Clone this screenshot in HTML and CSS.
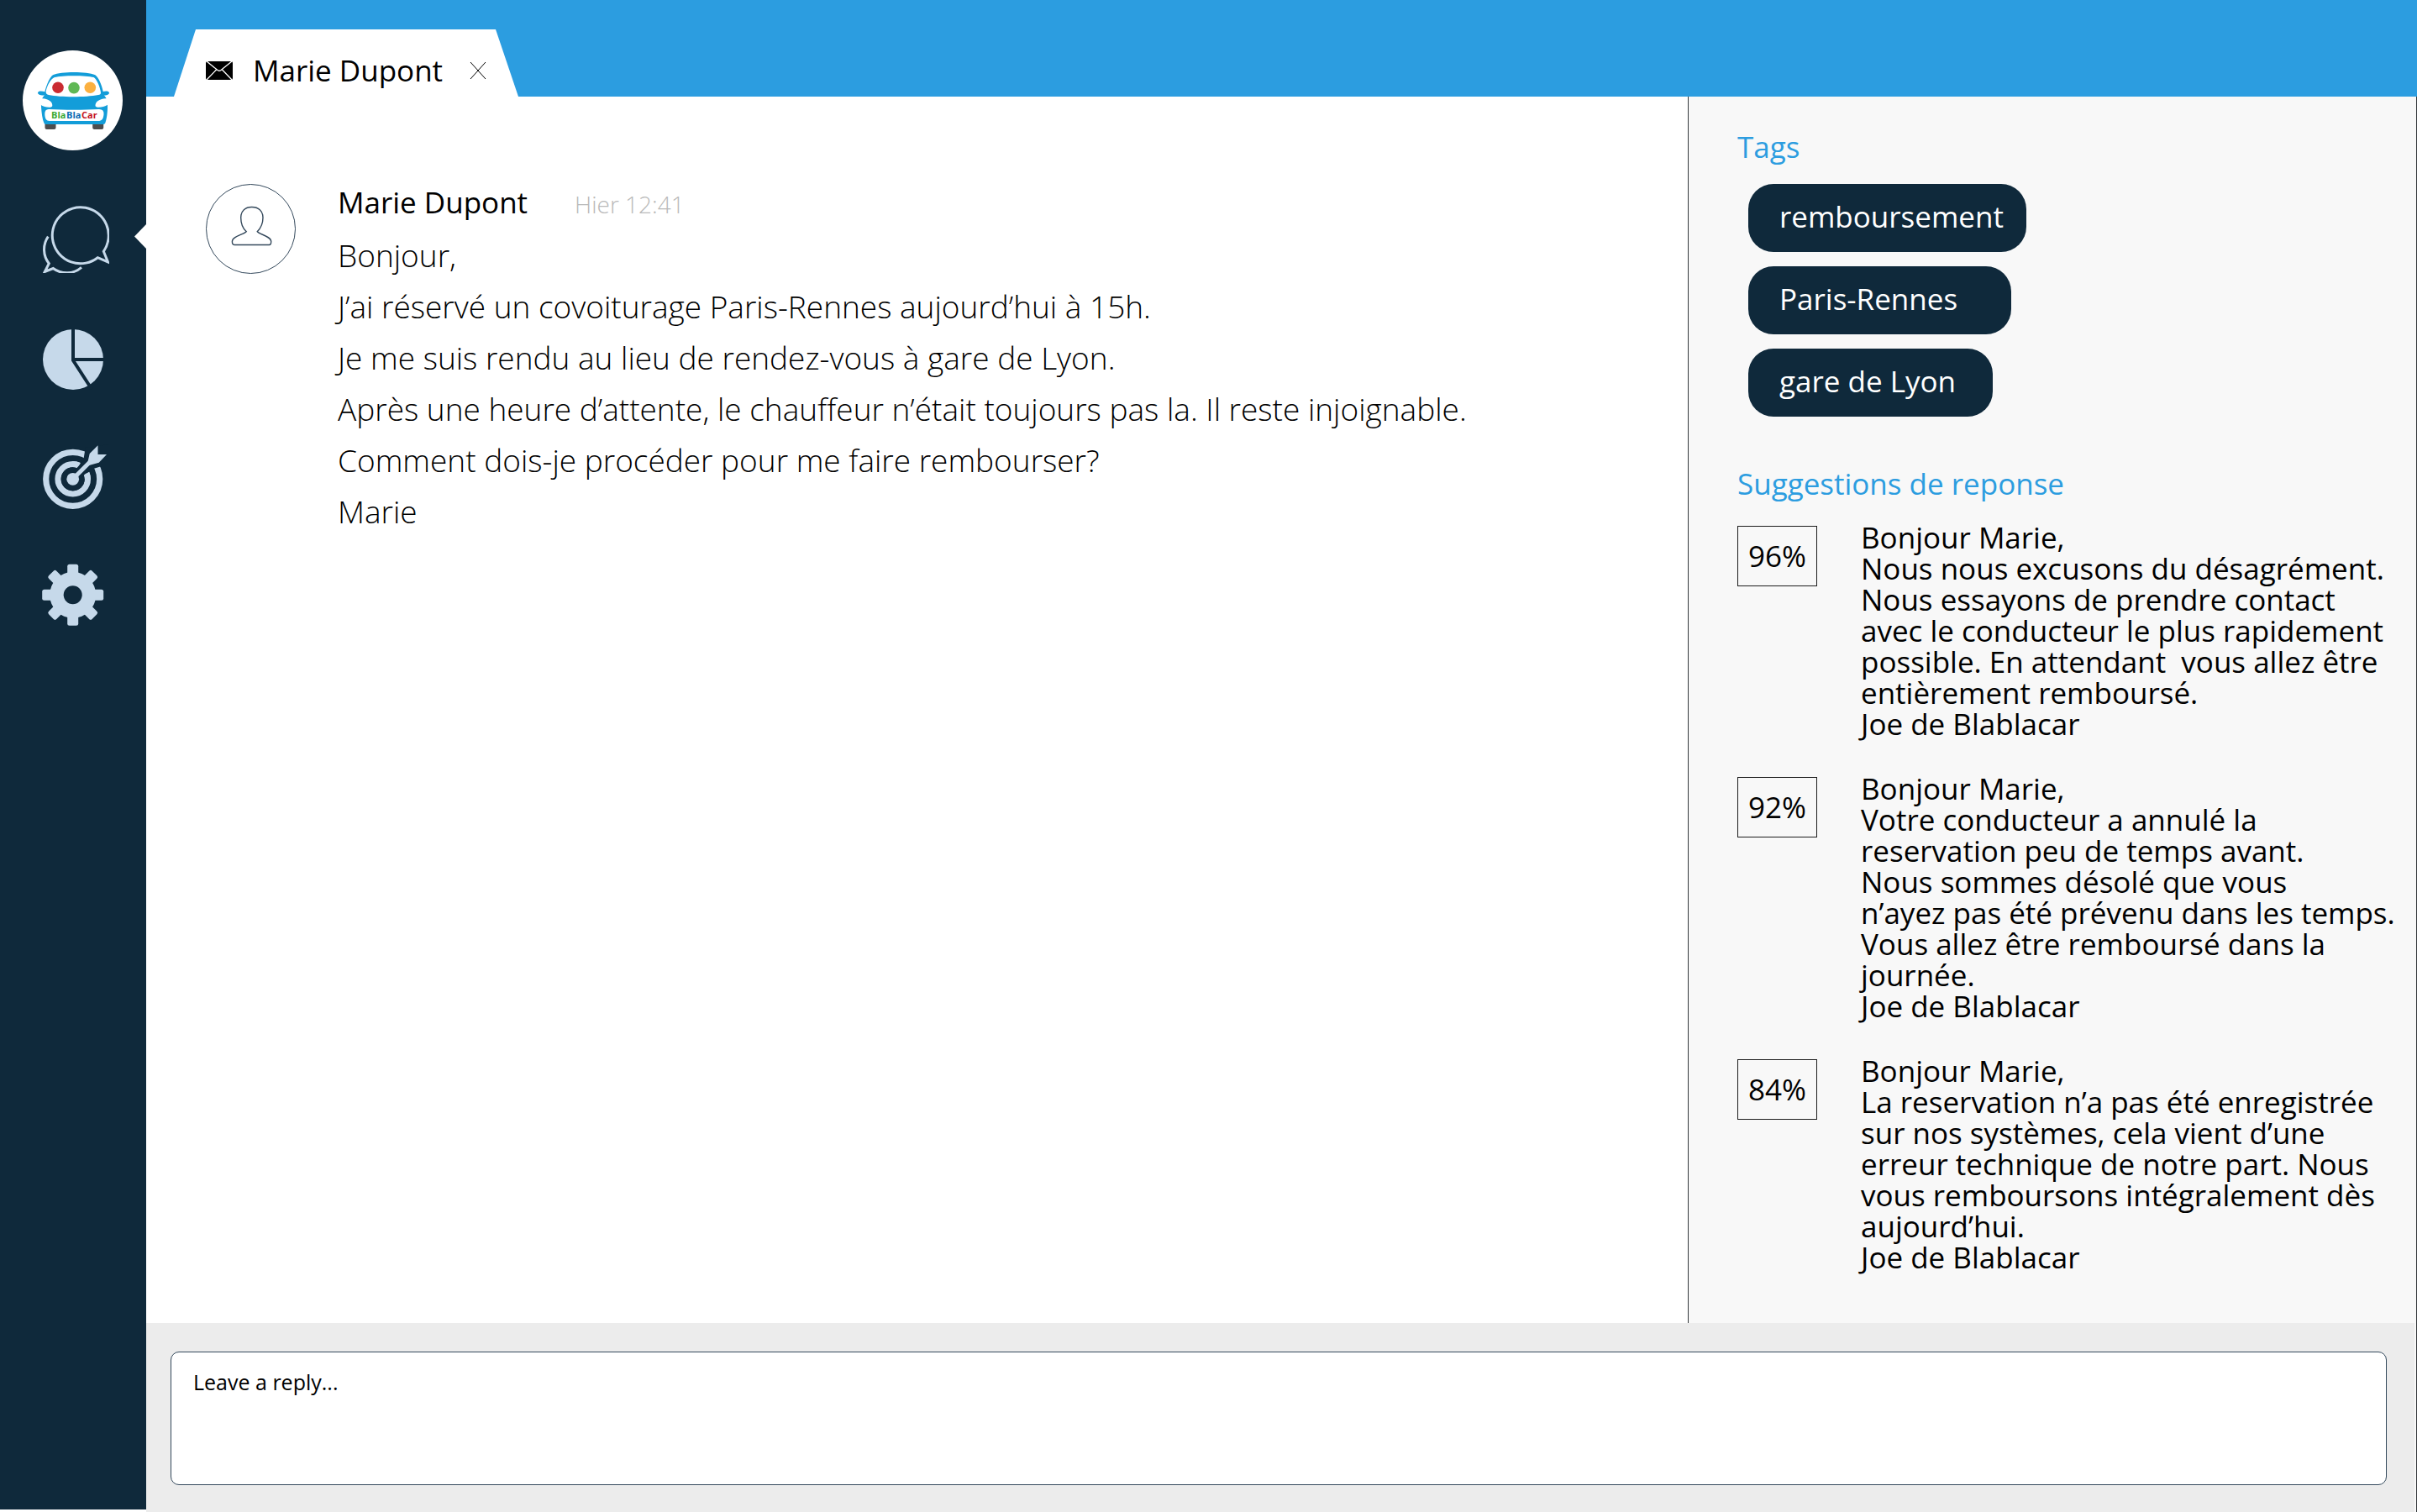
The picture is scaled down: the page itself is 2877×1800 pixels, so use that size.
FILE: index.html
```html
<!DOCTYPE html>
<html lang="fr">
<head>
<meta charset="utf-8">
<title>Marie Dupont</title>
<link rel="stylesheet" href="styles.css">
</head>
<body>
<div class="app">
  <aside class="sidebar">
    <a class="logo" href="#" aria-label="BlaBlaCar">
      <svg viewBox="0 0 119 119">
        <circle cx="59.500" cy="59.500" r="59.500" fill="#fff"/>
        <rect x="26.500" y="84" width="13" height="10" rx="2" fill="#4d4d4f"/>
        <rect x="83.200" y="84" width="13" height="10" rx="2" fill="#4d4d4f"/>
        <path fill="#139dd9" d="M36 29.300C46 25 76 25 86.300 29.300C90 31.500 94.500 42 95.700 49C98 48 103 48 103 50.500C103 53 99 53.500 97 53.500C100.500 57 101.300 62 101 69C100.800 77 99.500 83 98.300 86.500Q97.500 88 95.500 88H28Q26 88 25.400 86.500C23.500 82 22.500 75 22 67C21.700 60 23 56 26 53.500C22 53.500 18 53 18 50.500C18 48 23 48 26.300 49.300C28 42 32 32 36 29.300Z"/>
        <path fill="#fff" d="M38 32C47 29.500 75 29.500 84.500 32C88 34 92.500 44 93 50.500Q93 52.500 90 53C75 56 45 56 31 53Q27.500 52.500 27.600 49C29 42 33 34 38 32Z"/>
        <path fill="#fff" d="M21 57C28 57 36 60 35.300 66C35 69 26 68 21 64.500Z"/>
        <path fill="#fff" d="M101.500 57C94 57 86 60 86.500 66C87 69 96 68 101.500 64.500Z"/>
        <path fill="#fff" d="M31 70C48 71 74 71 91 70Q97 70 96.500 76C96 82 94 84 90 84H32C28 84 26.500 81 26.300 76Q26 70 31 70Z"/>
        <circle cx="42" cy="44.300" r="6.800" fill="#ca2b31"/>
        <circle cx="61" cy="44.600" r="6.800" fill="#60b855"/>
        <circle cx="80.300" cy="44.300" r="6.800" fill="#fbb040"/>
        <g class="logo-text">
          <text x="34" y="81" fill="#3aaa35">Bla</text>
          <text x="52" y="81" fill="#0b6cb5">Bla</text>
          <text x="70" y="81" fill="#c4131b">Car</text>
        </g>
      </svg>
    </a>
    <nav class="nav">
      <a class="nav-link active" href="#" aria-label="Conversations">
        <svg viewBox="0 0 80 80" fill="none" stroke="#c6d9ea" stroke-width="3">
          <path d="M73.300 54.300A33.500 33.500 0 1 0 66.300 61.700L78.500 67Z"/>
          <path d="M7.300 36.700A27 27 0 0 0 8.300 68.700L3.300 78.500L13.300 74.500A27 27 0 0 0 47 73.300"/>
        </svg>
      </a>
      <a class="nav-link" href="#" aria-label="Statistiques">
        <svg viewBox="0 0 80 80">
          <circle cx="37" cy="41" r="36" fill="#c6d9ea"/>
          <path d="M37 0V42L59 76M37 41H78" fill="none" stroke="#0f293b" stroke-width="4"/>
        </svg>
      </a>
      <a class="nav-link" href="#" aria-label="Objectifs">
        <svg viewBox="0 0 80 80">
          <g fill="none" stroke="#c6d9ea" stroke-width="7.200">
            <circle cx="36.700" cy="41.300" r="32"/>
            <circle cx="36.700" cy="41.300" r="17.700"/>
          </g>
          <path fill="#0f293b" d="M51.700 4L49.600 16.700L42 27L50.700 36.700L62 28.700L71 26L80 12V0Z"/>
          <circle cx="36.700" cy="41.300" r="14" fill="#0f293b"/>
          <path fill="none" stroke="#c6d9ea" stroke-width="7" d="M36.700 23.600Q41 23.600 44 25.500M54.400 41.300Q54.400 38 52.800 34.500"/>
          <path stroke="#0f293b" stroke-width="12" d="M40 38L60 18"/>
          <circle cx="36.700" cy="41.300" r="7.400" fill="#c6d9ea"/>
          <path stroke="#c6d9ea" stroke-width="5" d="M37 41L58 20"/>
          <path fill="#c6d9ea" d="M54 23L56.700 11L66.500 1.200V12H77L67.700 21.700L56 25Z"/>
        </svg>
      </a>
      <a class="nav-link" href="#" aria-label="Paramètres">
        <svg viewBox="0 0 80 80">
          <g fill="#c6d9ea" transform="translate(36.700 37.300)">
            <circle r="27.500"/>
            <rect x="-6.500" y="-36.500" width="13" height="73" rx="2.500"/>
            <rect x="-6.500" y="-36.500" width="13" height="73" rx="2.500" transform="rotate(45)"/>
            <rect x="-6.500" y="-36.500" width="13" height="73" rx="2.500" transform="rotate(90)"/>
            <rect x="-6.500" y="-36.500" width="13" height="73" rx="2.500" transform="rotate(135)"/>
            <circle r="11" fill="#0f293b"/>
          </g>
        </svg>
      </a>
    </nav>
  </aside>

  <div class="workspace">
    <header class="topbar">
      <div class="tab">
        <svg class="tab-mail" viewBox="0 0 32 22">
          <rect width="32" height="22" rx="2"/>
          <path d="M1 0L14 10.500Q16 12 18 10.500L31 0M1 22L12.500 10M31 22L19.500 10" fill="none" stroke="#fff" stroke-width="1.300"/>
        </svg>
        <span class="tab-title">Marie Dupont</span>
        <button class="tab-close" type="button" aria-label="Fermer">
          <svg viewBox="0 0 20 20"><path d="M1 0L19 20M19 0L1 20" stroke="#000" stroke-width="1"/></svg>
        </button>
      </div>
    </header>

    <div class="content">
      <main class="conversation">
        <article class="message">
          <svg class="avatar" viewBox="0 0 107 107" fill="none" stroke="#34495c">
            <circle cx="53.500" cy="53.500" r="53" stroke-width="1"/>
            <path stroke-width="1.400" d="M48.300 56.700C44 53 41.700 47 41.700 40C41.700 32 47 27.500 54.700 27.500C62.500 27.500 68 32 68 40C68 47 65 53 61.200 56.700C63 60 77.700 62 77.700 68.500C77.700 71 77 72.500 75.500 72.500H34C32 72.500 31.400 71 31.400 68.500C31.400 62 46 60 48.300 56.700Z"/>
          </svg>
          <div class="message-body">
            <div class="message-head">
              <h1 class="author">Marie Dupont</h1>
              <time class="time">Hier 12:41</time>
            </div>
            <p class="message-text">Bonjour,<br>
            J’ai réservé un covoiturage Paris-Rennes aujourd’hui à 15h.<br>
            Je me suis rendu au lieu de rendez-vous à gare de Lyon.<br>
            Après une heure d’attente, le chauffeur n’était toujours pas la. Il reste injoignable.<br>
            Comment dois-je procéder pour me faire rembourser?<br>
            Marie</p>
          </div>
        </article>
      </main>

      <aside class="panel">
        <h2 class="panel-title">Tags</h2>
        <ul class="tags">
          <li class="tag tag-long">remboursement</li>
          <li class="tag tag-medium">Paris-Rennes</li>
          <li class="tag tag-short">gare de Lyon</li>
        </ul>
        <h2 class="panel-title">Suggestions de reponse</h2>
        <ul class="suggestions">
          <li class="suggestion">
            <span class="score">96%</span>
            <p class="suggestion-text">Bonjour Marie,<br>Nous nous excusons du désagrément.<br>Nous essayons de prendre contact<br>avec le conducteur le plus rapidement<br>possible. En attendant&nbsp; vous allez être<br>entièrement remboursé.<br>Joe de Blablacar</p>
          </li>
          <li class="suggestion">
            <span class="score">92%</span>
            <p class="suggestion-text">Bonjour Marie,<br>Votre conducteur a annulé la<br>reservation peu de temps avant.<br>Nous sommes désolé que vous<br>n’ayez pas été prévenu dans les temps.<br>Vous allez être remboursé dans la<br>journée.<br>Joe de Blablacar</p>
          </li>
          <li class="suggestion">
            <span class="score">84%</span>
            <p class="suggestion-text">Bonjour Marie,<br>La reservation n’a pas été enregistrée<br>sur nos systèmes, cela vient d’une<br>erreur technique de notre part. Nous<br>vous remboursons intégralement dès<br>aujourd’hui.<br>Joe de Blablacar</p>
          </li>
        </ul>
      </aside>
    </div>

    <footer class="bottom">
      <form class="composer">
        <textarea class="reply" aria-label="Leave a reply" placeholder="Leave a reply..."></textarea>
      </form>
    </footer>
  </div>
</div>
</body>
</html>
```

FILE: styles.css
```css
:root {
  --navy: #0f293b;
  --blue: #2c9de0;
  --line: #34383b;
  --panel: #f8f8f8;
}

* {
  box-sizing: border-box;
}

body {
  margin: 0;
  background: #fff;
  color: #000;
  font-family: "Open Sans", "Noto Sans", sans-serif;
  font-size: 35px;
}

h1, h2, p, ul {
  margin: 0;
  padding: 0;
  font-size: inherit;
  font-weight: 400;
  list-style: none;
}

svg {
  display: block;
  width: 100%;
}

.app {
  display: flex;
  min-height: 100vh;
}

/* Sidebar */
.sidebar {
  flex: none;
  width: 174px;
  margin-bottom: 3px;
  padding-top: 60px;
  background: var(--navy);
}

.logo {
  display: block;
  width: 119px;
  margin: 0 0 66px 27px;
}

.logo-text {
  font-size: 11px;
  font-weight: 700;
}

.nav {
  display: flex;
  flex-direction: column;
  gap: 62px;
}

.nav-link {
  position: relative;
  padding-left: 50px;
}

.nav-link svg {
  width: 80px;
  height: 80px;
}

.nav-link.active::after {
  content: "";
  position: absolute;
  top: 22px;
  right: 0;
  width: 14px;
  height: 29px;
  background: #fff;
  clip-path: polygon(100% 0, 0 50%, 100% 100%);
}

/* Main column */
.workspace {
  flex: 1;
  min-width: 0;
  display: flex;
  flex-direction: column;
}

.topbar {
  display: flex;
  align-items: flex-end;
  height: 115px;
  padding-left: 33px;
  background: var(--blue);
}

.tab {
  display: flex;
  align-items: center;
  width: 410px;
  height: 80px;
  padding: 18px 38px 0;
  background: #fff;
  clip-path: polygon(26px 0, calc(100% - 27px) 0, 100% 100%, 0 100%);
}

.tab-mail {
  flex: none;
  width: 32px;
}

.tab-title {
  flex: 1;
  margin-left: 24px;
  line-height: 48px;
  white-space: nowrap;
}

.tab-close {
  flex: none;
  width: 20px;
  padding: 0;
  border: 0;
  background: none;
}

.content {
  flex: 1;
  display: flex;
}

.conversation {
  flex: 1;
  min-width: 0;
  padding: 96px 71px;
}

.message {
  display: flex;
  gap: 50px;
}

.avatar {
  flex: none;
  width: 107px;
  height: 107px;
  margin-top: 8px;
}

.message-head {
  display: flex;
  align-items: baseline;
  gap: 56px;
  line-height: 60px;
}

.time {
  color: #b9b9b9;
  font-size: 28px;
  font-weight: 300;
}

.message-text {
  font-size: 37px;
  font-weight: 300;
  line-height: 61px;
}

/* Right panel */
.panel {
  flex: none;
  width: 868px;
  padding: 36px 0 58px 58px;
  border: solid var(--line);
  border-width: 0 1px;
  background: var(--panel);
}

.panel-title {
  color: var(--blue);
  line-height: 48px;
}

.tags {
  display: flex;
  flex-direction: column;
  align-items: flex-start;
  gap: 17px;
  margin: 20px 0 56px 13px;
}

.tag {
  padding: 0 0 4px 37px;
  border-radius: 30px;
  background: var(--navy);
  color: #fff;
  line-height: 77px;
}

.tag-long {
  width: 331px;
}

.tag-medium {
  width: 313px;
}

.tag-short {
  width: 291px;
}

.suggestions {
  display: flex;
  flex-direction: column;
  gap: 40px;
  margin-top: 21px;
}

.suggestion {
  display: flex;
  align-items: flex-start;
  gap: 52px;
}

.score {
  flex: none;
  width: 95px;
  margin-top: 5px;
  border: 1px solid #1c1c1c;
  line-height: 70px;
  text-align: center;
}

.suggestion-text {
  line-height: 37px;
  white-space: nowrap;
}

/* Reply box */
.bottom {
  padding-right: 2px;
  border-right: 1px solid var(--line);
  background: var(--panel);
}

.composer {
  padding: 34px 33px 32px 29px;
  background: #ececec;
}

.reply {
  display: block;
  width: 100%;
  height: 159px;
  padding: 18px 26px;
  border: 1px solid #34495c;
  border-radius: 10px;
  background: #fff;
  font: inherit;
  font-size: 25px;
  resize: none;
}

.reply::placeholder {
  color: #000;
  opacity: 1;
}
```
